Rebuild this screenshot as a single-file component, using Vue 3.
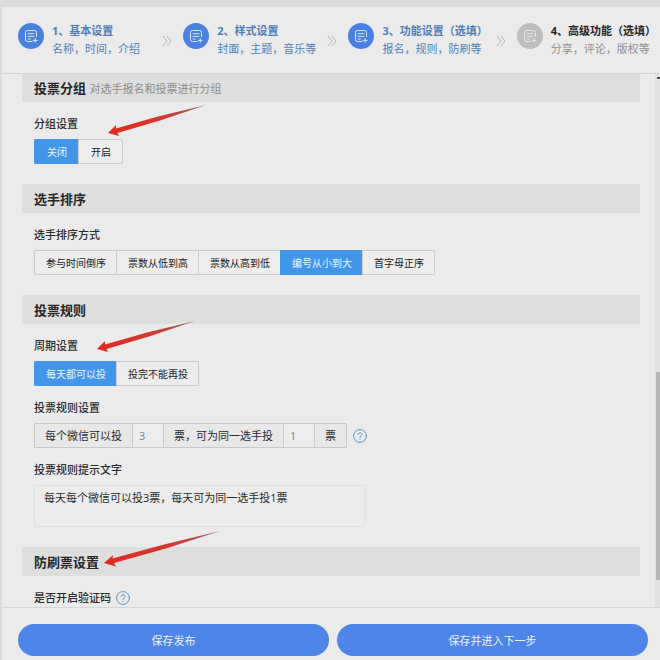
<template>
  <div class="page">
    <div class="panel">
      <!-- 步骤条 -->
      <nav class="steps">
        <a v-for="(step, index) in steps" :key="step.title" href="#" class="step" :class="{ pending: index > currentStep }" @click.prevent="currentStep = index">
          <span class="step-icon">
            <svg viewBox="0 0 26 26" fill="none" stroke="currentColor" stroke-linecap="round" stroke-linejoin="round">
              <path d="M18.5 13.5V9.5a2 2 0 0 0-2-2h-7a2 2 0 0 0-2 2v7a2 2 0 0 0 2 2h4.5" />
              <path d="M10 10.7h6M10 13.4h6M10 16h2.5M17.2 15.4v4M15.2 17.4h4" />
            </svg>
          </span>
          <span class="step-text">
            <strong>{{ step.title }}</strong>
            <span>{{ step.desc }}</span>
          </span>
          <svg v-if="index < steps.length - 1" class="chevron" viewBox="0 0 10 12" fill="none" stroke="currentColor">
            <path d="M1 1l4 5-4 5M5 1l4 5-4 5" />
          </svg>
        </a>
      </nav>

      <div class="body">
        <div class="content">
          <section class="section">
            <h2>投票分组 <small>对选手报名和投票进行分组</small></h2>
            <div class="field">
              <h3>分组设置</h3>
              <div class="btn-group">
                <button v-for="item in groupOptions" :key="item" type="button" :class="{ active: group === item }" @click="group = item">{{ item }}</button>
              </div>
            </div>
            <svg class="arrow arrow-group" viewBox="0 0 98 31"><path :d="arrowPath" fill="url(#arrowFill)" /></svg>
          </section>

          <section class="section">
            <h2>选手排序</h2>
            <div class="field">
              <h3>选手排序方式</h3>
              <div class="btn-group">
                <button v-for="item in sortOptions" :key="item" type="button" :class="{ active: sort === item }" @click="sort = item">{{ item }}</button>
              </div>
            </div>
          </section>

          <section class="section">
            <h2>投票规则</h2>
            <div class="field">
              <h3>周期设置</h3>
              <div class="btn-group">
                <button v-for="item in cycleOptions" :key="item" type="button" :class="{ active: cycle === item }" @click="cycle = item">{{ item }}</button>
              </div>
            </div>
            <div class="field">
              <h3>投票规则设置</h3>
              <div class="rule-row">
                <div class="rule-group">
                  <label for="total">每个微信可以投</label>
                  <input id="total" v-model="total" type="text" />
                  <label for="single">票，可为同一选手投</label>
                  <input id="single" v-model="single" type="text" />
                  <span class="unit">票</span>
                </div>
                <button type="button" class="help" aria-label="帮助">
                  <svg viewBox="0 0 14 14" fill="none" stroke="currentColor" stroke-linecap="round">
                    <circle cx="7" cy="7" r="6.4" />
                    <path d="M5.1 5.5a1.9 1.9 0 1 1 2.9 1.6c-.7.4-1 .7-1 1.4M7 10.3v.2" />
                  </svg>
                </button>
              </div>
            </div>
            <div class="field">
              <h3><label for="tip">投票规则提示文字</label></h3>
              <textarea id="tip" v-model="tip"></textarea>
            </div>
            <svg class="arrow arrow-cycle" viewBox="0 0 98 31"><path :d="arrowPath" fill="url(#arrowFill)" /></svg>
          </section>

          <section class="section">
            <h2>防刷票设置</h2>
            <div class="field">
              <h3>
                是否开启验证码
                <button type="button" class="help" aria-label="帮助">
                  <svg viewBox="0 0 14 14" fill="none" stroke="currentColor" stroke-linecap="round">
                    <circle cx="7" cy="7" r="6.4" />
                    <path d="M5.1 5.5a1.9 1.9 0 1 1 2.9 1.6c-.7.4-1 .7-1 1.4M7 10.3v.2" />
                  </svg>
                </button>
              </h3>
            </div>
            <svg class="arrow arrow-guard" viewBox="0 0 116 36">
              <defs>
                <linearGradient id="arrowFill" x1="0" x2="1" y1="0" y2="0">
                  <stop offset="0" stop-color="#e02a20" />
                  <stop offset="0.6" stop-color="#d23a30" />
                  <stop offset="1" stop-color="#8c6a68" />
                </linearGradient>
              </defs>
              <path d="M0 32L9 24L8.5 27.5L60 13.5L116 0L62 17.5L10 32L12 35.5Z" fill="url(#arrowFill)" />
            </svg>
          </section>
        </div>
        <div class="scrollbar">
          <span class="scroll-up"></span>
          <span class="thumb"></span>
        </div>
      </div>

      <!-- 底部操作 -->
      <footer class="footer">
        <button type="button">保存发布</button>
        <button type="button">保存并进入下一步</button>
      </footer>
    </div>
  </div>
</template>

<script setup>
import { ref } from 'vue'

const steps = [
  { title: '1、基本设置', desc: '名称，时间，介绍' },
  { title: '2、样式设置', desc: '封面，主题，音乐等' },
  { title: '3、功能设置（选填）', desc: '报名，规则，防刷等' },
  { title: '4、高级功能（选填）', desc: '分享，评论，版权等' }
]
const currentStep = ref(2)

const groupOptions = ['关闭', '开启']
const group = ref('关闭')

const sortOptions = ['参与时间倒序', '票数从低到高', '票数从高到低', '编号从小到大', '首字母正序']
const sort = ref('编号从小到大')

const cycleOptions = ['每天都可以投', '投完不能再投']
const cycle = ref('每天都可以投')

const total = ref('3')
const single = ref('1')
const tip = ref('每天每个微信可以投3票，每天可为同一选手投1票')

const arrowPath = 'M0 28L8 20L8 23.5L50 11.5L98 0L52 15.5L9.5 28L11 31Z'
</script>

<style>
html, body { margin: 0; background: #dcdcdc; }
</style>

<style scoped>
* { box-sizing: border-box; }
.page { height: 100vh; padding: 7px 0 0 2px; background: #dcdcdc; font-family: "Open Sans", "Noto Sans CJK SC", sans-serif; font-size: 11px; line-height: 16px; color: #2b2b2b; }
.panel { height: 100%; display: flex; flex-direction: column; background: #ebebeb; }
button, input, textarea { font-family: inherit; }
button { cursor: pointer; }

.steps { position: relative; z-index: 1; display: grid; grid-template-columns: repeat(3, 1fr) auto; height: 66px; flex: none; padding: 16px 4px 0 16px; box-shadow: 0 1px 0 #d6d6d6; }
.step { display: flex; align-items: flex-start; gap: 8px; color: #4f7fb9; text-decoration: none; white-space: nowrap; }
.step-icon { width: 26px; height: 26px; border-radius: 50%; background: #4a80df; color: #dce8fb; flex: none; }
.step-icon svg { display: block; width: 26px; height: 26px; }
.step-text { display: flex; flex-direction: column; gap: 2px; }
.step-text strong { font-weight: 700; }
.chevron { width: 10px; height: 12px; margin: 12px 11px 0 auto; color: #b9b9b9; }
.step.pending { color: #8f8f8f; }
.step.pending strong { color: #262626; }
.step.pending .step-icon { background: #bebebe; color: #e6e6e6; }

.body { flex: 1; min-height: 0; display: flex; }
.content { flex: 1; overflow-y: auto; scrollbar-width: none; padding: 0 15px 0 20px; }
.section { position: relative; margin-bottom: 20px; }
.section:last-child { margin-bottom: 0; }
h2 { margin: 0; height: 29px; padding: 0 12px; background: #dedede; font-size: 13px; line-height: 30px; font-weight: 700; color: #262626; }
h2 small { font-size: 11px; font-weight: 400; color: #8d8d8d; }
.field { padding: 14px 12px 0; }
h3 { display: flex; align-items: center; gap: 5px; margin: 0 0 7px; height: 16px; font-size: 11px; font-weight: 500; }
.section:last-child h3 { margin-bottom: 0; }

.btn-group { display: flex; width: max-content; border-right: 1px solid #cdcdcd; border-radius: 2px; }
.btn-group button { min-width: 44px; height: 25px; padding: 0 10px 0 11px; border: 1px solid #cdcdcd; border-right: 0; background: #ededed; color: #222; font-size: 10px; }
.btn-group button:first-child { border-radius: 2px 0 0 2px; }
.btn-group button.active { background: #4296e9; border-color: #4296e9; color: #eaf4ff; }

.rule-row { display: flex; align-items: center; gap: 6px; }
.rule-group { display: flex; height: 25px; border: 1px solid #c9c9c9; border-radius: 1px; line-height: 23px; }
.rule-group label, .rule-group .unit { padding: 0 10px; background: #e8e8e8; }
.rule-group input { width: 32px; border: solid #cdcdcd; border-width: 0 1px; border-radius: 0; padding: 0 6px; background: #ededed; color: #858585; font-size: 11px; outline: none; }
.help { width: 14px; height: 14px; padding: 0; border: 0; background: none; color: #5d93bb; }
.help svg { display: block; width: 14px; height: 14px; }
textarea { display: block; width: 331px; max-width: 100%; height: 42px; padding: 4px 9px; border: 1px solid #e0e0e0; border-radius: 1px; background: #ececec; color: #2b2b2b; font-size: 11px; line-height: 16px; resize: none; outline: none; }

/* 红色指示箭头，浮在内容上方 */
.arrow { position: absolute; pointer-events: none; overflow: visible; }
.arrow-group { left: 86px; top: 32px; width: 98px; height: 31px; }
.arrow-cycle { left: 75px; top: 26px; width: 98px; height: 31px; }
.arrow-guard { left: 82px; top: -16px; width: 116px; height: 36px; }

.scrollbar { position: relative; width: 5px; background: #e1e1e1; }
.scroll-up { position: absolute; top: 4px; right: 0; width: 3px; height: 2px; background: #555; }
.thumb { position: absolute; right: 0; top: 56%; width: 4px; height: 39%; background: #b5b5b5; }

.footer { flex: none; display: flex; gap: 8px; padding: 16px 12px 4px 16px; border-top: 1px solid #d6d9d9; }
.footer button { flex: 1; height: 32px; border: 0; border-radius: 16px; background: #4e85e9; color: #edf3ff; font-size: 11px; }
</style>
